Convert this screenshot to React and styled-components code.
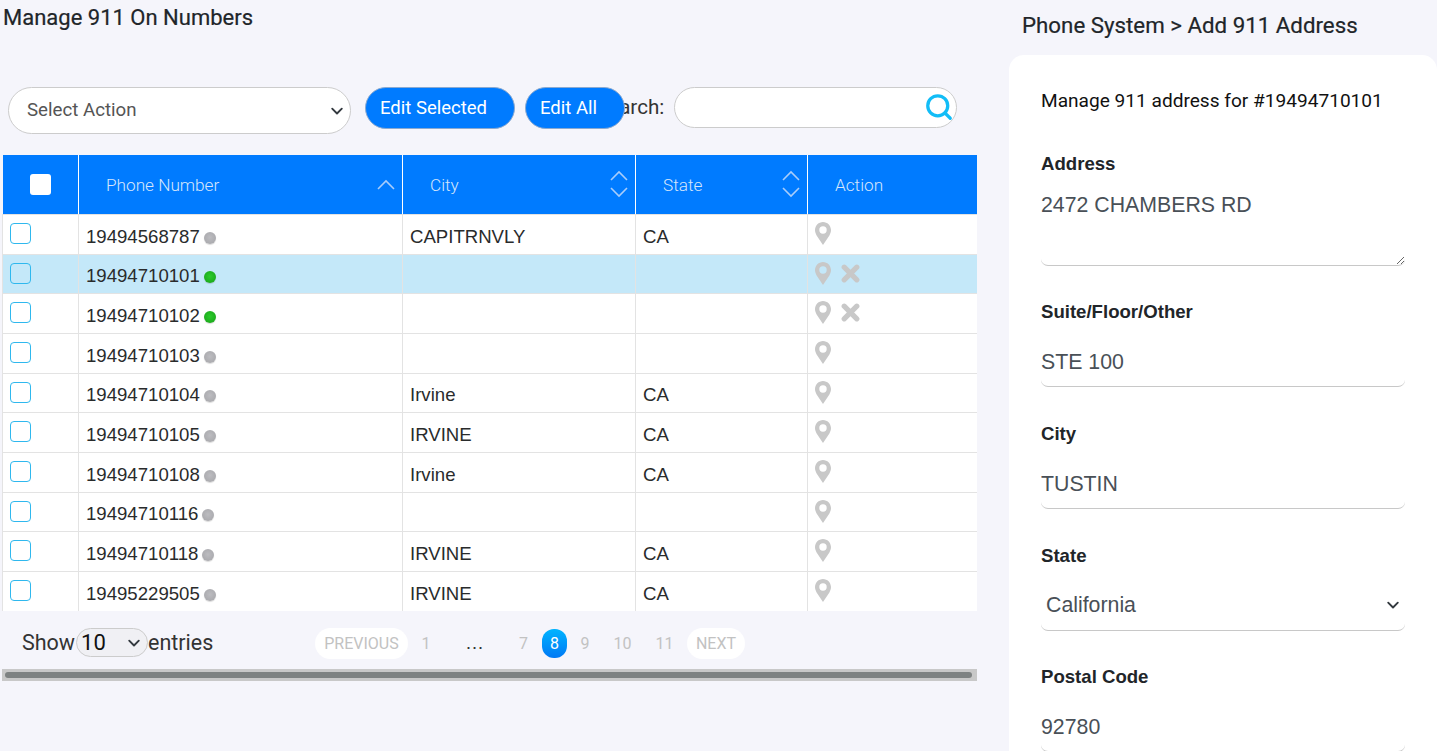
import React from "react";
import styled, { createGlobalStyle } from "styled-components";
import { Search } from "lucide-react";

const GlobalStyle = createGlobalStyle`
  html, body {
    margin: 0;
    height: 751px;
    overflow: hidden;
    background: #f5f5fb;
  }
  * { box-sizing: border-box; }
`;

const chevronBg = `
  appearance: none;
  background-image: url("data:image/svg+xml,%3csvg xmlns='http://www.w3.org/2000/svg' viewBox='0 0 16 16'%3e%3cpath fill='none' stroke='%23343a40' stroke-width='1.9' stroke-linecap='round' stroke-linejoin='round' d='m3.200 5.700 4.800 4.800 4.800-4.800'/%3e%3c/svg%3e");
  background-repeat: no-repeat;
  background-size: 16px 16px;
`;

const Page = styled.div`
  display: flex;
  gap: 32px;
  height: 751px;
  overflow: hidden;
  font-family: Roboto, sans-serif;
  color: #333;
`;

const LeftColumn = styled.div`
  width: 975px;
  margin-left: 2px;
  flex: none;
`;

const PageTitle = styled.h2`
  margin: 0 0 0 1px;
  height: 87px;
  padding-top: 5px;
  font-size: 22px;
  line-height: 26px;
  font-weight: 400;
  color: #212529;
  -webkit-text-stroke: 0.2px #212529;
`;

const Toolbar = styled.div`
  display: flex;
  align-items: flex-start;
  height: 47px;
  margin-bottom: 21px;
  padding-left: 6px;
`;

const ActionSelect = styled.select`
  ${chevronBg}
  background-color: #fff;
  background-position: right 5px center;
  width: 343px;
  height: 47px;
  padding: 0 0 2px 18px;
  border: 1px solid #ccc;
  border-radius: 24px;
  color: #555;
  font: 400 18.7px Roboto, sans-serif;
`;

const BlueButton = styled.button`
  position: relative;
  z-index: 1;
  width: ${(p) => p.$width}px;
  height: 42px;
  margin-left: ${(p) => p.$gap}px;
  padding: 0 0 1px 14px;
  border: 1px solid #8aa9d0;
  border-radius: 21px;
  background: #007bff;
  color: #fff;
  font: 400 18.5px Roboto, sans-serif;
  text-align: left;
`;

const SearchLabel = styled.label`
  display: flex;
  align-items: flex-start;
  gap: 10px;
  margin-left: -29px;
  font-size: 20.6px;
  line-height: 40px;
  color: #333;
`;

const SearchBox = styled.div`
  position: relative;
  width: 283px;
  height: 41px;
`;

const SearchInput = styled.input`
  display: block;
  width: 100%;
  height: 100%;
  border: 1px solid #ccc;
  border-radius: 21px;
  background: #fff;
  outline: none;
`;

const SearchIcon = styled(Search)`
  position: absolute;
  right: 3px;
  top: 5px;
  color: #12bdf7;
`;

const Table = styled.table`
  width: 975px;
  table-layout: fixed;
  border-collapse: separate;
  border-spacing: 0;
  background: #fff;
`;

const HeadCell = styled.th`
  position: relative;
  height: 59px;
  padding: 0 0 0 ${(p) => p.$pad}px;
  background: #007bff;
  border-right: 1px solid #fff;
  color: #d6e6fb;
  font: 300 17.2px Roboto, sans-serif;
  text-align: left;
  &:first-child { border-left: 1px solid #f5f5fb; }
  &:last-child { border-right: 0; }
`;

const HeadCheck = styled.span`
  display: block;
  width: 21px;
  height: 21px;
  border-radius: 3px;
  background: #fff;
`;

const SortIcon = styled.svg`
  position: absolute;
  right: 6px;
  top: ${(p) => p.$top}px;
`;

const Row = styled.tr`
  height: 39.67px;
  background: ${(p) => (p.$selected ? "#c4e8f9" : "#fff")};
`;

const Cell = styled.td`
  height: 39.67px;
  padding: 5px 0 0 7px;
  border-right: 1px solid #e3e3e3;
  border-top: 1px solid #e3e3e3;
  color: #292b2c;
  font: 400 18.6px/22px "Liberation Sans", Arial, sans-serif;
  white-space: nowrap;
  &:first-child {
    border-left: 1px solid #e3e3e3;
    vertical-align: top;
    padding: 8px 0 0 7px;
  }
  &:last-child {
    border-right: 0;
    vertical-align: top;
    padding: 7px 0 0 7px;
  }
`;

const CheckBox = styled.span`
  display: block;
  width: 21px;
  height: 21px;
  border: 1px solid #2fb8ee;
  border-radius: 4px;
`;

const StatusDot = styled.span`
  display: inline-block;
  width: 12px;
  height: 12px;
  margin-left: 4px;
  vertical-align: -1px;
  border-radius: 50%;
  background: ${(p) =>
    p.$online
      ? "radial-gradient(circle at 50% 45%, #2ccb2c, #17a017)"
      : "radial-gradient(circle at 50% 45%, #bcbcc0, #a4a4a8)"};
  box-shadow: 0 1px 1px rgba(0, 0, 0, 0.15);
`;

const Actions = styled.div`
  display: flex;
  align-items: flex-start;
  gap: 10px;
  color: #c8c8c8;
`;

const TableFooter = styled.div`
  display: flex;
  align-items: flex-start;
  height: 58px;
  padding: 17px 0 0 20px;
`;

const ShowLabel = styled.div`
  display: flex;
  align-items: center;
  width: 293px;
  height: 30px;
  font-size: 21.5px;
  color: #333;
`;

const LengthSelect = styled.select`
  ${chevronBg}
  background-color: #f0f0f4;
  background-position: right 5px center;
  width: 72px;
  height: 29px;
  margin-left: 1px;
  padding: 0 0 0 4px;
  border: 1px solid #ccc;
  border-radius: 15px;
  color: #111;
  font: 400 22px Roboto, sans-serif;
`;

const Pagination = styled.div`
  display: flex;
  align-items: center;
  height: 31px;
`;

const PageItem = styled.span`
  display: flex;
  align-items: center;
  justify-content: center;
  width: ${(p) => p.$width}px;
  height: ${(p) => (p.$active ? 29 : 31)}px;
  border-radius: ${(p) => (p.$active ? 12 : 16)}px;
  background: ${(p) =>
    p.$active
      ? "linear-gradient(to bottom, #00b4ff, #0079f5)"
      : p.$pill
        ? "#fff"
        : "transparent"};
  color: ${(p) => (p.$active ? "#fff" : "#c2c2c2")};
  font-size: 16px;
`;

const Ellipsis = styled.span`
  width: 61px;
  color: #333;
  font: 400 19px "Liberation Sans", Arial, sans-serif;
  text-align: center;
`;

const ScrollTrack = styled.div`
  height: 12px;
  padding: 3px 5px 0 3px;
  background: #c8c8c8;
`;

const ScrollThumb = styled.div`
  height: 6px;
  border-radius: 3px;
  background: #7e8282;
`;

const RightColumn = styled.div`
  flex: 1;
  min-width: 0;
`;

const SideTitle = styled.h2`
  margin: 0;
  height: 55px;
  padding: 12px 0 0 13px;
  font-size: 22.3px;
  line-height: 26px;
  font-weight: 400;
  color: #212529;
  -webkit-text-stroke: 0.2px #212529;
`;

const Panel = styled.div`
  height: 800px;
  padding: 33px 32px 0;
  border-radius: 15px 15px 0 0;
  background: #fff;
`;

const PanelIntro = styled.p`
  margin: 0 0 38px;
  font-size: 19.1px;
  line-height: 26px;
  color: #111;
`;

const Field = styled.div`
  margin-bottom: ${(p) => p.$after}px;
`;

const FieldLabel = styled.label`
  display: block;
  margin-bottom: ${(p) => p.$gap}px;
  font: 700 18.6px/24px "Liberation Sans", Arial, sans-serif;
  color: #212529;
`;

const controlStyles = `
  display: block;
  width: 364px;
  border: 0;
  border-bottom: 1px solid #c8c8c8;
  border-radius: 7px;
  outline: none;
  color: #495057;
  font: 400 21.3px "Liberation Sans", Arial, sans-serif;
`;

const TextInput = styled.input`
  ${controlStyles}
  background: #fff;
  height: 48px;
  padding: 0;
`;

const TextArea = styled.textarea`
  ${controlStyles}
  background: #fff;
  height: 76px;
  padding: 0;
  line-height: 30px;
`;

const StateSelect = styled.select`
  ${controlStyles}
  ${chevronBg}
  background-color: #fff;
  background-position: right 4px top 14px;
  height: 48px;
  padding: 0 0 3px 5px;
`;

const PinIcon = () => (
  <svg width="16" height="23" viewBox="0 0 16 23" fill="currentColor">
    <path
      fillRule="evenodd"
      d="M8 0C3.6 0 0 3.6 0 8c0 2 .7 3.6 1.6 5.400L8 23l6.400-9.600C15.300 11.600 16 10 16 8c0-4.400-3.600-8-8-8zm0 4.300a3.700 3.700 0 1 1 0 7.400 3.700 3.700 0 0 1 0-7.400z"
    />
  </svg>
);

const CloseIcon = () => (
  <svg width="19" height="21" viewBox="0 0 19 21" fill="none">
    <path d="M3.200 5.200l12.600 12.600M15.800 5.200L3.200 17.800" stroke="currentColor" strokeWidth="5.200" strokeLinecap="round" />
  </svg>
);

const Chevron = ({ up, top }) => (
  <SortIcon $top={top} width="20" height="11" viewBox="0 0 20 11" fill="none">
    <path
      d={up ? "M2 10l8-8 8 8" : "M2 1l8 8 8-8"}
      stroke="#a9cdfa"
      strokeWidth="1.6"
    />
  </SortIcon>
);

const rows = [
  ["19494568787", false, "CAPITRNVLY", "CA", false],
  ["19494710101", true, "", "", true],
  ["19494710102", true, "", "", true],
  ["19494710103", false, "", "", false],
  ["19494710104", false, "Irvine", "CA", false],
  ["19494710105", false, "IRVINE", "CA", false],
  ["19494710108", false, "Irvine", "CA", false],
  ["19494710116", false, "", "", false],
  ["19494710118", false, "IRVINE", "CA", false],
  ["19495229505", false, "IRVINE", "CA", false],
];

export default function App() {
  return (
    <Page>
      <GlobalStyle />
      <LeftColumn>
        <PageTitle>Manage 911 On Numbers</PageTitle>
        <Toolbar>
          <ActionSelect defaultValue="">
            <option value="">Select Action</option>
          </ActionSelect>
          <BlueButton $width={150} $gap={14}>Edit Selected</BlueButton>
          <BlueButton $width={100} $gap={10}>Edit All</BlueButton>
          <SearchLabel>
            Search:
            <SearchBox>
              <SearchInput />
              <SearchIcon size={30} strokeWidth={2.6} />
            </SearchBox>
          </SearchLabel>
        </Toolbar>
        <Table>
          <colgroup>
            <col width="77" />
            <col width="324" />
            <col width="233" />
            <col width="172" />
            <col width="169" />
          </colgroup>
          <thead>
            <tr>
              <HeadCell $pad={27}><HeadCheck /></HeadCell>
              <HeadCell $pad={27}>Phone Number<Chevron up top={24} /></HeadCell>
              <HeadCell $pad={27}>City<Chevron up top={15} /><Chevron top={32} /></HeadCell>
              <HeadCell $pad={27}>State<Chevron up top={15} /><Chevron top={32} /></HeadCell>
              <HeadCell $pad={27}>Action</HeadCell>
            </tr>
          </thead>
          <tbody>
            {rows.map(([phone, online, city, state, removable], i) => (
              <Row key={phone} $selected={i === 1}>
                <Cell><CheckBox /></Cell>
                <Cell>{phone}<StatusDot $online={online} /></Cell>
                <Cell>{city}</Cell>
                <Cell>{state}</Cell>
                <Cell>
                  <Actions>
                    <PinIcon />
                    {removable && <CloseIcon />}
                  </Actions>
                </Cell>
              </Row>
            ))}
          </tbody>
        </Table>
        <TableFooter>
          <ShowLabel>
            Show
            <LengthSelect defaultValue="10">
              <option value="10">10</option>
            </LengthSelect>
            entries
          </ShowLabel>
          <Pagination>
            <PageItem $width={93} $pill>PREVIOUS</PageItem>
            <PageItem $width={36}>1</PageItem>
            <Ellipsis>…</Ellipsis>
            <PageItem $width={37}>7</PageItem>
            <PageItem $width={25} $active>8</PageItem>
            <PageItem $width={36}>9</PageItem>
            <PageItem $width={39}>10</PageItem>
            <PageItem $width={45}>11</PageItem>
            <PageItem $width={58} $pill>NEXT</PageItem>
          </Pagination>
        </TableFooter>
        <ScrollTrack><ScrollThumb /></ScrollTrack>
      </LeftColumn>
      <RightColumn>
        <SideTitle>Phone System &gt; Add 911 Address</SideTitle>
        <Panel>
          <PanelIntro>Manage 911 address for #19494710101</PanelIntro>
          <Field $after={34}>
            <FieldLabel $gap={14}>Address</FieldLabel>
            <TextArea defaultValue="2472 CHAMBERS RD" />
          </Field>
          <Field $after={35}>
            <FieldLabel $gap={15}>Suite/Floor/Other</FieldLabel>
            <TextInput defaultValue="STE 100" />
          </Field>
          <Field $after={35}>
            <FieldLabel $gap={15}>City</FieldLabel>
            <TextInput defaultValue="TUSTIN" />
          </Field>
          <Field $after={34}>
            <FieldLabel $gap={15}>State</FieldLabel>
            <StateSelect defaultValue="CA">
              <option value="CA">California</option>
            </StateSelect>
          </Field>
          <Field $after={35}>
            <FieldLabel $gap={15}>Postal Code</FieldLabel>
            <TextInput defaultValue="92780" />
          </Field>
        </Panel>
      </RightColumn>
    </Page>
  );
}
